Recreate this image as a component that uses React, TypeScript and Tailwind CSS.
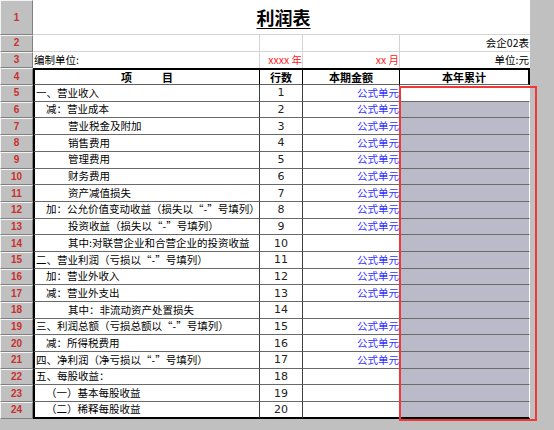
const FONT = "font-['Noto_Sans_CJK_SC','Noto_Sans',sans-serif]";

type Item = { label: string; indent: 0 | 1 | 2; formula: boolean };

const items: Item[] = [
  { label: "一、营业收入", indent: 0, formula: true },
  { label: "减：营业成本", indent: 1, formula: true },
  { label: "营业税金及附加", indent: 2, formula: true },
  { label: "销售费用", indent: 2, formula: true },
  { label: "管理费用", indent: 2, formula: true },
  { label: "财务费用", indent: 2, formula: true },
  { label: "资产减值损失", indent: 2, formula: true },
  { label: "加：公允价值变动收益（损失以“-”号填列）", indent: 1, formula: true },
  { label: "投资收益（损失以“-”号填列）", indent: 2, formula: true },
  { label: "其中:对联营企业和合营企业的投资收益", indent: 2, formula: false },
  { label: "二、营业利润（亏损以“-”号填列）", indent: 0, formula: true },
  { label: "加：营业外收入", indent: 1, formula: true },
  { label: "减：营业外支出", indent: 1, formula: true },
  { label: "其中：非流动资产处置损失", indent: 2, formula: false },
  { label: "三、利润总额（亏损总额以“-”号填列）", indent: 0, formula: true },
  { label: "减：所得税费用", indent: 1, formula: true },
  { label: "四、净利润（净亏损以“-”号填列）", indent: 0, formula: true },
  { label: "五、每股收益：", indent: 0, formula: false },
  { label: "（一）基本每股收益", indent: 1, formula: false },
  { label: "（二）稀释每股收益", indent: 1, formula: false },
];

const indentClass = ["pl-[1px]", "pl-[11px]", "pl-[33px]"];

function RowHead({ n, tall }: { n: number; tall?: boolean }) {
  return (
    <div
      className={`${tall ? "h-[35px]" : "h-[16.7px]"} w-[33px] shrink-0 flex items-center justify-center bg-[#c0c0c0] border-t border-l border-t-[#f4f4f4] border-l-[#f4f4f4] border-b border-r border-b-[#808080] border-r-[#808080] text-[10px] font-bold text-[#c8302e] font-['Liberation_Sans',sans-serif]`}
    >
      {n}
    </div>
  );
}

export default function App() {
  return (
    <div className={`relative w-[554px] h-[430px] overflow-hidden bg-[#c0c0c0] ${FONT} text-[10.5px] text-black leading-none`}>
      <div className="flex flex-col">
        {/* row 1 - title */}
        <div className="flex">
          <RowHead n={1} tall />
          <div className="h-[35px] w-[497px] bg-white border-b border-[#d4d4d4] flex items-center justify-center">
            <span className="text-[18px] font-bold underline underline-offset-[3px] decoration-1 pl-[4px]">利润表</span>
          </div>
        </div>

        {/* row 2 */}
        <div className="flex">
          <RowHead n={2} />
          <div className="h-[16.7px] w-[227px] bg-white border-r border-b border-[#d4d4d4]" />
          <div className="h-[16.7px] w-[43px] bg-white border-r border-b border-[#d4d4d4]" />
          <div className="h-[16.7px] w-[97px] bg-white border-r border-b border-[#d4d4d4]" />
          <div className="h-[16.7px] w-[130px] bg-white border-b border-[#d4d4d4] flex items-center justify-end pr-[1px]">
            会企02表
          </div>
        </div>

        {/* row 3 */}
        <div className="flex">
          <RowHead n={3} />
          <div className="h-[16.7px] w-[227px] bg-white border-r border-[#d4d4d4] flex items-center pl-[1px]">
            编制单位:
          </div>
          <div className="h-[16.7px] w-[43px] bg-white border-r border-[#d4d4d4] flex items-center justify-end text-[#ff2020] whitespace-nowrap">
            xxxx&nbsp;年
          </div>
          <div className="h-[16.7px] w-[97px] bg-white border-r border-[#d4d4d4] flex items-center justify-end text-[#ff2020]">
            xx&nbsp;月
          </div>
          <div className="h-[16.7px] w-[130px] bg-white flex items-center justify-end pr-[1px]">
            单位:元
          </div>
        </div>

        {/* row 4 - header */}
        <div className="flex">
          <RowHead n={4} />
          <div className="h-[16.7px] w-[227px] bg-white border-l-2 border-t-2 border-r border-b border-black border-b-[#606060] flex items-center justify-center gap-[30px] font-bold text-[11px]">
            <span>项</span>
            <span>目</span>
          </div>
          <div className="h-[16.7px] w-[43px] bg-white border-t-2 border-r border-b border-black border-b-[#606060] flex items-center justify-center font-bold text-[11px]">
            行数
          </div>
          <div className="h-[16.7px] w-[97px] bg-white border-t-2 border-r border-b border-black border-b-[#606060] flex items-center justify-center font-bold text-[11px]">
            本期金额
          </div>
          <div className="h-[16.7px] w-[130px] bg-white border-t-2 border-r-2 border-b border-black border-b-[#606060] flex items-center justify-center font-bold text-[11px]">
            本年累计
          </div>
        </div>

        {/* rows 5-24 */}
        {items.map((it, i) => {
          const last = i === items.length - 1;
          const bottom = last ? "border-b-2 border-b-black" : "border-b border-b-[#6a6a6a]";
          return (
            <div key={i} className="flex">
              <RowHead n={i + 5} />
              <div className={`h-[16.7px] w-[227px] bg-white border-l-2 border-l-black border-r border-r-[#404040] ${bottom} flex items-center whitespace-nowrap ${indentClass[it.indent]}`}>
                {it.label}
              </div>
              <div className={`h-[16.7px] w-[43px] bg-white border-r border-r-[#404040] ${bottom} flex items-center justify-center text-[11px] font-['DejaVu_Sans',sans-serif] text-[#222]`}>
                {i + 1}
              </div>
              <div className={`h-[16.7px] w-[97px] bg-white border-r border-r-[#404040] ${bottom} flex items-center justify-end text-[#3232ff]`}>
                {it.formula ? "公式单元" : ""}
              </div>
              <div className={`h-[16.7px] w-[130px] ${i === 0 ? "bg-white" : "bg-[#babac8]"} border-r border-r-white ${bottom}`} />
            </div>
          );
        })}
      </div>

      {/* selection outline */}
      <div className="absolute left-[399px] top-[86px] w-[138px] h-[335px] border-2 border-[#f03838] pointer-events-none" />
    </div>
  );
}
